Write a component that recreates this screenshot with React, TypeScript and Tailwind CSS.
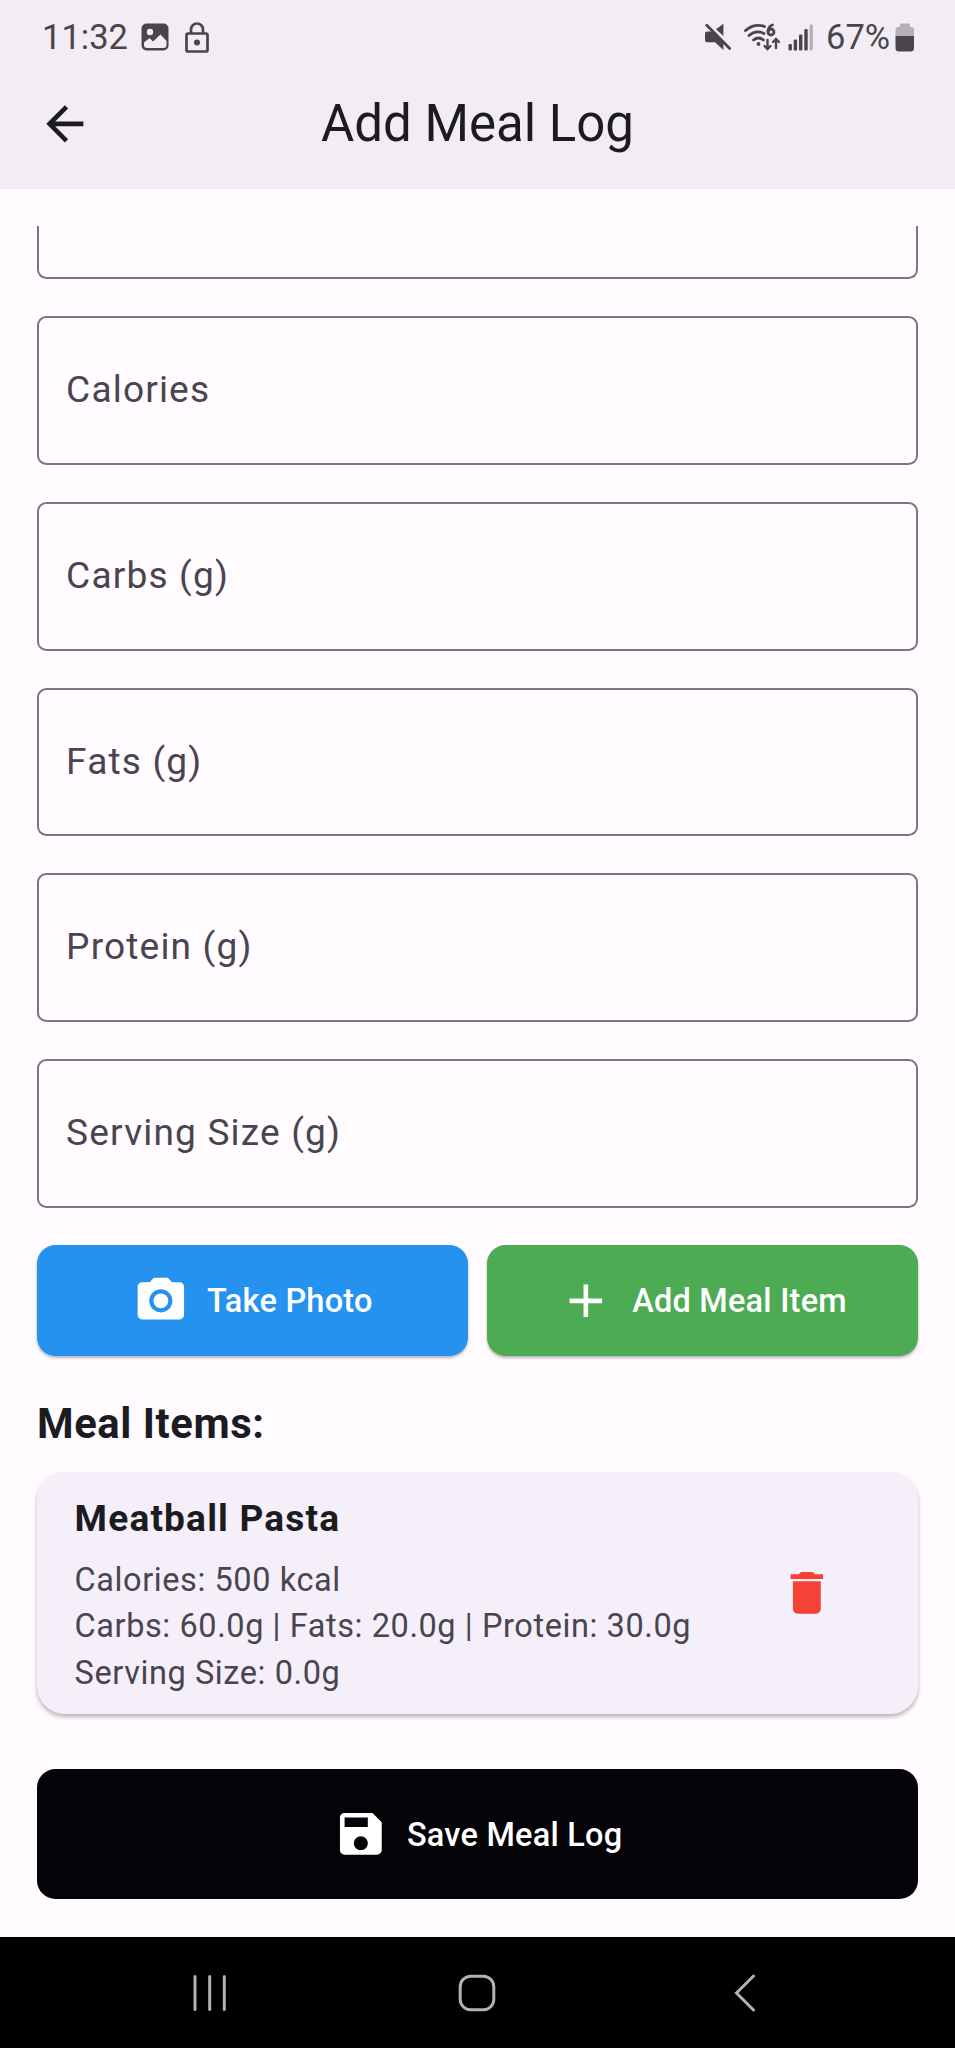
import type { ReactNode } from "react";

const fields = ["Calories", "Carbs (g)", "Fats (g)", "Protein (g)", "Serving Size (g)"];

function Icon({ d, className = "" }: { d: string; className?: string }) {
  return (
    <svg viewBox="0 0 24 24" fill="currentColor" className={`h-[55.7px] w-[55.7px] shrink-0 ${className}`}>
      <path d={d} />
    </svg>
  );
}

const ARROW = "M20 11H7.83l5.59-5.59L12 4l-8 8 8 8 1.41-1.41L7.83 13H20v-2z";
const CAMERA =
  "M9 2 7.17 4H4c-1.1 0-2 .9-2 2v12c0 1.1.9 2 2 2h16c1.1 0 2-.9 2-2V6c0-1.1-.9-2-2-2h-3.17L15 2H9zm3 15c-2.76 0-5-2.24-5-5s2.24-5 5-5 5 2.24 5 5-2.24 5-5 5zM12 8.8a3.2 3.2 0 1 0 0 6.4 3.2 3.2 0 0 0 0-6.4z";
const PLUS = "M19 13h-6v6h-2v-6H5v-2h6V5h2v6h6v2z";
const TRASH = "M6 19c0 1.1.9 2 2 2h8c1.1 0 2-.9 2-2V7H6v12zM19 4h-3.5l-1-1h-5l-1 1H5v2h14V4z";
const SAVE =
  "M17 3H5c-1.11 0-2 .9-2 2v14c0 1.1.89 2 2 2h14c1.1 0 2-.9 2-2V7l-4-4zm-5 16c-1.66 0-3-1.34-3-3s1.34-3 3-3 3 1.34 3 3-1.34 3-3 3zm3-10H5V5h10v4z";

function StatusBar() {
  return (
    <div className="flex h-[74px] items-center justify-between pl-[42px] pr-[40.5px] text-[34.5px] leading-[41px] text-[#49454b]">
      <div className="flex items-center">
        <span className="w-[88px]">11:32</span>
        <svg viewBox="0 0 28 28" className="ml-[11px] h-[28px] w-[28px]">
          <rect x="0.5" y="0.5" width="27" height="27" rx="5" fill="currentColor" />
          <circle cx="9" cy="9" r="3.2" fill="#f2edf5" />
          <path d="M3 19.5 8.5 15 12 18.5 19.5 11.5 25.5 18v4a3 3 0 0 1-3 3H6a3 3 0 0 1-3-3z" fill="#f2edf5" />
        </svg>
        <svg viewBox="0 0 24 31" className="ml-[16px] h-[31px] w-[24px]" fill="none" stroke="currentColor" strokeWidth="2.7">
          <rect x="1.5" y="11.5" width="21" height="18" rx="1.5" />
          <path d="M6 11.5V7.5a6 6 0 0 1 12 0v4" />
          <circle cx="12" cy="20.5" r="3" fill="currentColor" stroke="none" />
        </svg>
      </div>
      <div className="flex items-center">
        <svg viewBox="0 0 27 28" className="h-[28px] w-[27px]" fill="currentColor">
          <path d="M19.4 .8V13L12 6.3zM3 8.5h5L19.4 19.5V27L11 19.2H3a2 2 0 0 1-2-2v-6.7a2 2 0 0 1 2-2z" />
          <path d="M2.8 2.3 25.7 25.5" stroke="currentColor" strokeWidth="2.8" strokeLinecap="round" />
        </svg>
        <svg viewBox="0 0 37 28" className="ml-[13px] h-[28px] w-[37px]" fill="none" stroke="currentColor" strokeWidth="2.8" strokeLinecap="round">
          <path d="M1.5 7.5Q10.5 0 20.5 3.5M5 12.5Q12 6.5 20 10.5M9.5 17Q14.5 13 19.5 17" />
          <circle cx="14.5" cy="21" r="1.9" fill="currentColor" stroke="none" />
          <circle cx="27" cy="9" r="3" />
          <path d="M28.5 2Q24.5 3 24 8.5" />
          <path d="M23.5 17v9M20.5 23l3 3 3-3M32 25v-9M29 19l3-3 3 3" strokeWidth="2.4" />
        </svg>
        <svg viewBox="0 0 26 27" className="ml-[7px] h-[27px] w-[26px]" fill="currentColor">
          <rect x="0.5" y="20" width="3.4" height="6.5" rx="1" />
          <rect x="5.7" y="15.5" width="3.4" height="11" rx="1" />
          <rect x="11" y="10.5" width="3.4" height="16" rx="1" />
          <rect x="16.3" y="5" width="3.4" height="21.5" rx="1" />
          <rect x="21.5" y="0.5" width="3.4" height="26" rx="1" opacity="0.35" />
        </svg>
        <span className="ml-[12.5px] w-[68.5px]">67%</span>
        <svg viewBox="0 0 20 29" className="h-[29px] w-[20px]">
          <path d="M5 4V1.5Q5 .5 6 .5h8q1 0 1 1V4h1.5Q19 4 19 7v7H.5V7Q.5 4 3.5 4z" fill="#b4b0b7" />
          <path d="M.5 13H19v12q0 3.5-3.5 3.5H4Q.5 28.5.5 25z" fill="currentColor" />
        </svg>
      </div>
    </div>
  );
}

function ActionButton({ className, icon, children }: { className: string; icon: string; children: ReactNode }) {
  return (
    <button
      className={`flex items-center justify-center gap-[18.6px] rounded-[18.6px] text-[32.5px] font-medium tracking-[0.23px] text-white ${className}`}
    >
      <Icon d={icon} />
      <span className="pt-[2px]">{children}</span>
    </button>
  );
}

export default function App() {
  return (
    <div className="flex h-[2048px] w-[955px] flex-col overflow-hidden bg-[#fffbff] font-['Roboto',sans-serif]">
      <header className="h-[189px] shrink-0 bg-[#f2edf5]">
        <StatusBar />
        <div className="grid h-[100px] grid-cols-[1fr_auto_1fr] items-center pl-[37.4px] pr-[37.4px] text-[#1c1b1f]">
          <Icon d={ARROW} />
          <h1 className="pb-[2px] text-[51px] leading-[65px]">Add Meal Log</h1>
        </div>
      </header>

      <main className="flex flex-1 flex-col px-[37.1px] pt-[37px]">
        <div className="h-[53.2px] shrink-0 rounded-b-[9.3px] border-2 border-t-0 border-[#7b757f]" />
        {fields.map((label) => (
          <div
            key={label}
            className="mt-[37.14px] flex h-[148.6px] shrink-0 items-center rounded-[9.3px] border-2 border-[#7b757f] pb-[1px] pl-[27px] text-[37.1px] tracking-[1.16px] text-[#49454f]"
          >
            {label}
          </div>
        ))}

        <div className="mt-[37.1px] grid h-[111.4px] shrink-0 grid-cols-2 gap-[18.6px]">
          <ActionButton icon={CAMERA} className="bg-[#2592ef] shadow-[0_2px_3px_rgba(0,0,0,0.28)]">
            Take Photo
          </ActionButton>
          <ActionButton icon={PLUS} className="bg-[#4dab53] shadow-[0_2px_3px_rgba(0,0,0,0.28)]">
            Add Meal Item
          </ActionButton>
        </div>

        <h2 className="mt-[42.3px] text-[41.8px] leading-[49px] font-bold tracking-[0.55px] text-[#1c1b1f]">Meal Items:</h2>

        <section className="mt-[24px] flex h-[242px] shrink-0 items-center justify-between rounded-[27.9px] bg-[#f4eff9] pl-[37.5px] pr-[83.5px] shadow-[0_3px_4px_rgba(0,0,0,0.28)]">
          <div className="pt-[2px] text-[32.5px] leading-[46.4px] tracking-[0.58px] text-[#49454f]">
            <h3 className="mb-[10px] text-[37.1px] leading-[56px] font-bold tracking-[1.16px] text-[#1c1b1f]">Meatball Pasta</h3>
            <p>Calories: 500 kcal</p>
            <p>Carbs: 60.0g | Fats: 20.0g | Protein: 30.0g</p>
            <p>Serving Size: 0.0g</p>
          </div>
          <Icon d={TRASH} className="text-[#f44236]" />
        </section>

        <ActionButton icon={SAVE} className="mt-[55.5px] h-[130px] shrink-0 bg-[#040308]">
          Save Meal Log
        </ActionButton>
      </main>

      <nav className="flex h-[111.5px] shrink-0 items-center bg-black pt-[1px] pl-[192.5px]">
        <svg viewBox="0 0 34 38" className="h-[38px] w-[34px]" stroke="#b2b2b2" strokeWidth="3" strokeLinecap="round">
          <path d="M2 2.5v33M16.7 2.5v33M31.3 2.5v33" />
        </svg>
        <svg viewBox="0 0 38 38" className="ml-[231px] h-[38px] w-[38px]" fill="none" stroke="#b2b2b2" strokeWidth="3">
          <rect x="2.2" y="2.2" width="33.6" height="33.6" rx="10.5" />
        </svg>
        <svg viewBox="0 0 22 38" className="ml-[238px] h-[38px] w-[22px]" fill="none" stroke="#b2b2b2" strokeWidth="3" strokeLinecap="round">
          <path d="M19.5 2 2.5 19l17 17" />
        </svg>
      </nav>
    </div>
  );
}
